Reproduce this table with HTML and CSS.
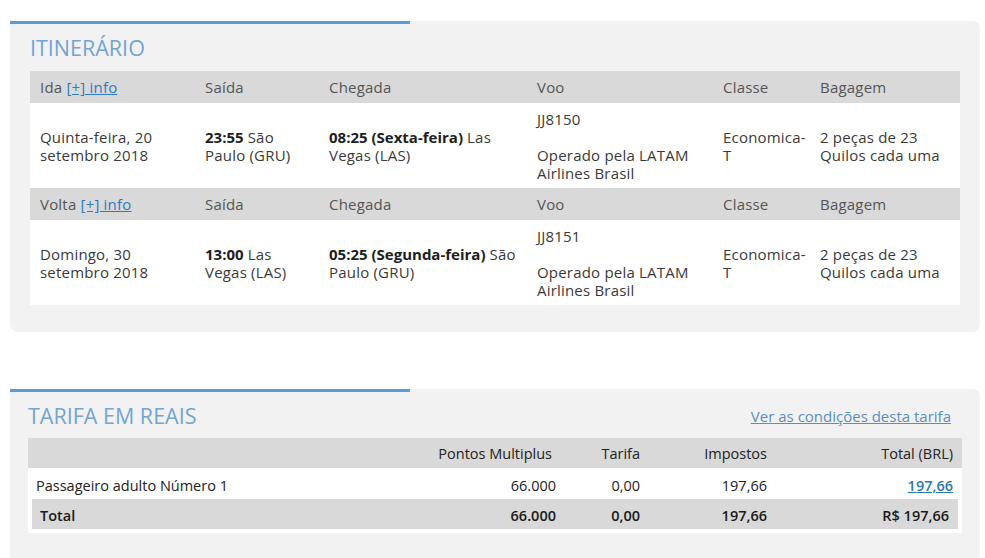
FILE: index.html
```html
<!DOCTYPE html>
<html lang="pt">
<head>
<meta charset="utf-8">
<title>Itinerário</title>
<link rel="stylesheet" href="styles.css">
</head>
<body>
<div class="page">
  <section class="panel panel-itin">
    <div class="tab-bar"></div>
    <div class="panel-body">
      <h2 class="panel-title">ITINERÁRIO</h2>
      <table class="itin">
        <colgroup>
          <col class="c1"><col class="c2"><col class="c3"><col class="c4"><col class="c5"><col class="c6">
        </colgroup>
        <tr class="head">
          <td>Ida <a href="#" class="info">[+] info</a></td>
          <td>Saída</td>
          <td>Chegada</td>
          <td>Voo</td>
          <td>Classe</td>
          <td>Bagagem</td>
        </tr>
        <tr class="data">
          <td>Quinta-feira, 20 setembro 2018</td>
          <td><b>23:55</b> São Paulo (GRU)</td>
          <td><b>08:25 (Sexta-feira)</b> Las Vegas (LAS)</td>
          <td>JJ8150<br><br>Operado pela LATAM Airlines Brasil</td>
          <td>Economica-T</td>
          <td>2 peças de 23 Quilos cada uma</td>
        </tr>
        <tr class="head">
          <td>Volta <a href="#" class="info">[+] info</a></td>
          <td>Saída</td>
          <td>Chegada</td>
          <td>Voo</td>
          <td>Classe</td>
          <td>Bagagem</td>
        </tr>
        <tr class="data">
          <td>Domingo, 30 setembro 2018</td>
          <td><b>13:00</b> Las Vegas (LAS)</td>
          <td><b>05:25 (Segunda-feira)</b> São Paulo (GRU)</td>
          <td>JJ8151<br><br>Operado pela LATAM Airlines Brasil</td>
          <td>Economica-T</td>
          <td>2 peças de 23 Quilos cada uma</td>
        </tr>
      </table>
    </div>
  </section>

  <section class="panel panel-fare">
    <div class="tab-bar"></div>
    <div class="panel-body fare-body">
      <div class="fare-top">
        <h2 class="panel-title">TARIFA EM REAIS</h2>
        <a href="#" class="cond">Ver as condições desta tarifa</a>
      </div>
      <div class="fare">
        <div class="frow fhead">
          <span></span>
          <span class="num pts">Pontos Multiplus</span>
          <span class="num">Tarifa</span>
          <span class="num">Impostos</span>
          <span class="num last">Total (BRL)</span>
        </div>
        <div class="frow fpax">
          <span class="lbl">Passageiro adulto Número 1</span>
          <span class="num">66.000</span>
          <span class="num">0,00</span>
          <span class="num">197,66</span>
          <span class="num last"><a href="#" class="tot-link">197,66</a></span>
        </div>
        <div class="frow ftotal">
          <span class="lbl">Total</span>
          <span class="num">66.000</span>
          <span class="num">0,00</span>
          <span class="num">197,66</span>
          <span class="num last">R$ 197,66</span>
        </div>
      </div>
    </div>
  </section>
</div>
</body>
</html>
```
FILE: styles.css
```css
html, body {
  margin: 0;
  padding: 0;
  background: #ffffff;
}
body {
  font-family: "Open Sans", "Liberation Sans", sans-serif;
  font-size: 15px;
  color: #333333;
}
.page {
  padding: 21px 5px 0 10px;
}
.panel {
  width: 970px;
  background: #f2f2f2;
  border-radius: 0 8px 8px 8px;
}
.tab-bar {
  width: 400px;
  height: 3px;
  background: #5b9bd5;
}
.panel-body {
  padding: 11px 20px 27px 20px;
}
.panel-title {
  margin: 0 0 10px 0;
  font-size: 21.5px;
  line-height: 26px;
  font-weight: 400;
  color: #72a4d4;
}
.itin {
  width: 930px;
  border-collapse: collapse;
  table-layout: fixed;
  letter-spacing: 0.2px;
}
.itin col.c1 { width: 165px; }
.itin col.c2 { width: 124px; }
.itin col.c3 { width: 208px; }
.itin col.c4 { width: 186px; }
.itin col.c5 { width: 97px; }
.itin col.c6 { width: 150px; }
.itin td {
  padding: 0 10px;
  line-height: 18px;
  vertical-align: middle;
}
.itin .head td {
  height: 32px;
  background: #d9d9d9;
  color: #555555;
}
.itin .data td {
  height: 85px;
  background: #ffffff;
  color: #3a3a3a;
}
.itin b {
  font-weight: 700;
  color: #1e1e1e;
  letter-spacing: 0;
}
.info {
  color: #2e7bbf;
  text-decoration: underline;
}
.panel-fare {
  margin-top: 57px;
  padding-bottom: 30px;
  border-radius: 0 8px 0 0;
}
.fare-body {
  padding: 0 18px 0 18px;
}
.fare-top {
  display: flex;
  justify-content: space-between;
  align-items: center;
  height: 46px;
  padding-top: 2px;
  box-sizing: border-box;
}
.fare-top .panel-title {
  margin: 0;
}
.cond {
  color: #5b8ec2;
  text-decoration: underline;
  margin-right: 11px;
  font-size: 15px;
}
.fare {
  background: #ffffff;
  padding-bottom: 4px;
  color: #222222;
  font-size: 14.5px;
}
.frow {
  display: grid;
  grid-template-columns: 1fr 160px 84px 127px 191px;
  align-items: center;
}
.frow .num {
  text-align: right;
  padding-right: 4px;
}
.frow .num.last {
  padding-right: 9px;
}
.fhead {
  height: 30px;
  background: #d9d9d9;
}
.fhead .pts {
  padding-right: 8px;
}
.fpax {
  height: 31px;
  padding-top: 4px;
  box-sizing: border-box;
}
.fpax .lbl {
  padding-left: 8px;
}
.tot-link {
  color: #2a7ab0;
  font-weight: 600;
  text-decoration: underline;
}
.ftotal {
  margin: 0 4px;
  height: 30px;
  padding-top: 3px;
  box-sizing: border-box;
  background: #d9d9d9;
  grid-template-columns: 1fr 160px 84px 127px 187px;
  font-weight: 600;
  color: #1a1a1a;
}
.ftotal .lbl {
  padding-left: 8px;
}
```
